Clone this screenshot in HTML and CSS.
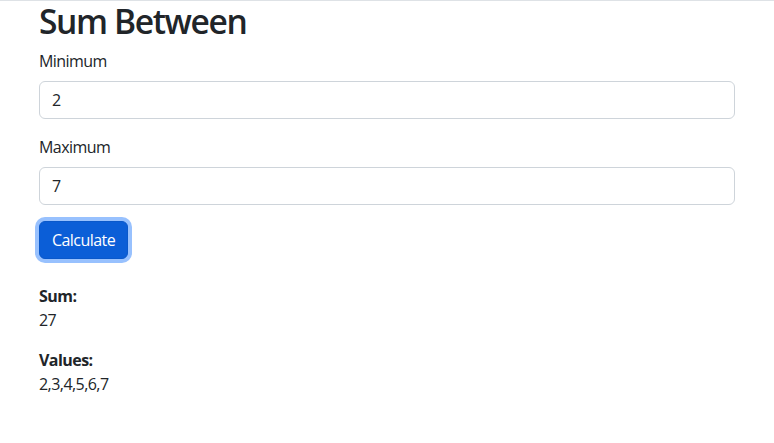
FILE: index.html
```html
<!DOCTYPE html>
<html lang="en">
<head>
<meta charset="utf-8">
<title>Sum Between</title>
<link rel="stylesheet" href="styles.css">
</head>
<body>
<div class="top-rule"></div>
<main class="container">
  <h1 class="title">Sum Between</h1>
  <div class="field">
    <label class="label" for="min">Minimum</label>
    <input class="control" id="min" type="text" value="2">
  </div>
  <div class="field">
    <label class="label" for="max">Maximum</label>
    <input class="control" id="max" type="text" value="7">
  </div>
  <div class="actions">
    <button class="btn" type="button">Calculate</button>
  </div>
  <div class="results">
    <p class="result"><strong>Sum:</strong><br>27</p>
    <p class="result"><strong>Values:</strong><br>2,3,4,5,6,7</p>
  </div>
</main>
</body>
</html>
```
FILE: styles.css
```css
* { box-sizing: border-box; }
html, body { margin: 0; padding: 0; background: #fff; }
body {
  font-family: "Open Sans", "Noto Sans", sans-serif;
  font-size: 16px;
  line-height: 1.5;
  color: #212529;
  letter-spacing: -0.55px;
}
.top-rule { height: 1px; background: #dee2e6; }
.container {
  max-width: 720px;
  margin: 0 auto;
  padding: 0 12px;
}
.title {
  margin: 0 0 8px;
  font-size: 33.6px;
  font-weight: 600;
  line-height: 1.2;
  letter-spacing: -1.4px;
}
.field { margin-bottom: 16px; }
.label { display: inline-block; margin-bottom: 8px; }
.control {
  display: block;
  width: 100%;
  height: 38px;
  padding: 6px 12px;
  font: inherit;
  letter-spacing: inherit;
  color: #212529;
  border: 1px solid #ced4da;
  border-radius: 6px;
  background: #fff;
}
.actions { margin-bottom: 25px; }
.btn {
  font: inherit;
  letter-spacing: inherit;
  height: 38px;
  padding: 6px 12px;
  color: #fff;
  background: #0b5ed7;
  border: 1px solid #0a58ca;
  border-radius: 6px;
  box-shadow: 0 0 0 4px rgba(49, 132, 253, 0.5);
  cursor: pointer;
}
.result { margin: 0 0 16px; }
.result strong { font-weight: 700; }
```
